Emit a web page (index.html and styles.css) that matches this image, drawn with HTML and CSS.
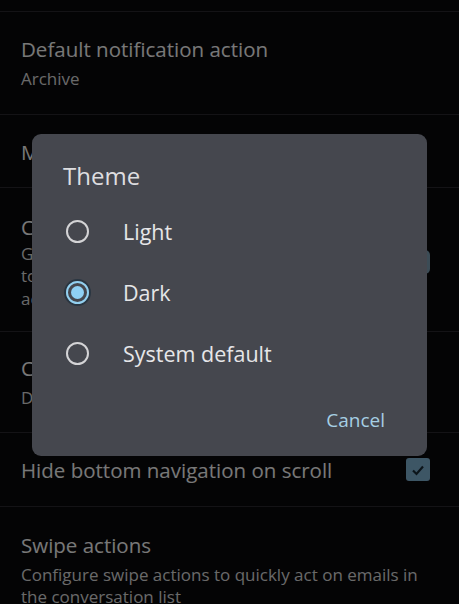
FILE: index.html
```html
<!DOCTYPE html>
<html>
<head>
<meta charset="utf-8">
<link rel="stylesheet" href="styles.css">
</head>
<body>
<div class="screen">
  <div class="list">
    <div class="topbar"></div>
    <div class="row">
      <div class="text">
        <div class="title">Default notification action</div>
        <div class="sub">Archive</div>
      </div>
    </div>
    <div class="row">
      <div class="text">
        <div class="title">Manage notifications</div>
      </div>
    </div>
    <div class="row row-tall">
      <div class="text">
        <div class="title">Conversation view</div>
        <div class="sub">Group emails with the same topic<br>together for IMAP, POP3 and Exchange<br>accounts</div>
      </div>
      <div class="toggle"><div class="thumb"></div></div>
    </div>
    <div class="row row-density">
      <div class="text">
        <div class="title">Conversation list density</div>
        <div class="sub">Default</div>
      </div>
    </div>
    <div class="row row-check">
      <div class="text">
        <div class="title">Hide bottom navigation on scroll</div>
      </div>
      <div class="checkbox">
        <svg width="16" height="16" viewBox="0 0 16 16"><path d="M3 8.5 L6.5 12 L13 4.5" fill="none" stroke="#1a2c38" stroke-width="2.2"/></svg>
      </div>
    </div>
    <div class="row last">
      <div class="text">
        <div class="title">Swipe actions</div>
        <div class="sub">Configure swipe actions to quickly act on emails in the conversation list</div>
      </div>
    </div>
  </div>
  <div class="scrim"></div>
  <div class="dialog">
    <div class="dialog-title">Theme</div>
    <div class="options">
      <div class="option">
        <span class="radio"></span>
        <span class="label">Light</span>
      </div>
      <div class="option">
        <span class="radio checked"><span class="dot"></span></span>
        <span class="label">Dark</span>
      </div>
      <div class="option">
        <span class="radio"></span>
        <span class="label">System default</span>
      </div>
    </div>
    <div class="actions">
      <span class="btn">Cancel</span>
    </div>
  </div>
</div>
</body>
</html>
```

FILE: styles.css
```css
* { box-sizing: border-box; }
html, body {
  margin: 0;
  padding: 0;
  background: #0a090c;
  width: 459px;
  height: 604px;
  overflow: hidden;
  font-family: "Open Sans", Roboto, "Liberation Sans", sans-serif;
}
.screen {
  position: relative;
  width: 459px;
  height: 604px;
  overflow: hidden;
}
.list {
  display: flex;
  flex-direction: column;
}
.topbar {
  height: 12px;
  border-bottom: 1px solid #2a292e;
}
.row {
  display: flex;
  align-items: center;
  justify-content: space-between;
  padding: 25px 29px 23px 21px;
  border-bottom: 1px solid #2a292e;
}
.row-tall {
  padding-top: 27px;
  padding-bottom: 21px;
}
.row-density {
  padding-top: 24px;
  padding-bottom: 22px;
}
.row-check {
  padding-bottom: 24px;
}
.row.last { border-bottom: none; padding-top: 26px; padding-right: 18px; }
.text {
  display: flex;
  flex-direction: column;
  gap: 7px;
  min-width: 0;
}
.row-tall .text { gap: 4px; }
.title {
  font-size: 20.5px;
  line-height: 24px;
  color: #fafafa;
}
.sub {
  font-size: 17px;
  line-height: 22.5px;
  color: #dcdcdc;
}
.toggle {
  flex: none;
  width: 44px;
  height: 24px;
  border-radius: 5px;
  background: #7d9fb4;
  margin-left: 16px;
  position: relative;
}
.toggle .thumb {
  position: absolute;
  right: 6px;
  top: 3px;
  width: 18px;
  height: 18px;
  border-radius: 50%;
  background: #d8ecf8;
}
.checkbox {
  flex: none;
  width: 24px;
  height: 23px;
  border-radius: 3px;
  background: #81b3d4;
  display: flex;
  align-items: center;
  justify-content: center;
}
.scrim {
  position: absolute;
  inset: 0;
  background: rgba(0, 0, 0, 0.52);
}
.dialog {
  position: absolute;
  left: 32px;
  top: 134px;
  width: 395px;
  height: 322px;
  border-radius: 9px;
  background: #45474e;
  display: flex;
  flex-direction: column;
  padding: 26px 0 0 0;
}
.dialog-title {
  padding-left: 31px;
  font-size: 24px;
  line-height: 32px;
  color: #dedee0;
}
.options {
  display: flex;
  flex-direction: column;
  margin-top: 9px;
}
.option {
  display: flex;
  align-items: center;
  height: 61px;
  padding-left: 34px;
}
.radio {
  width: 23px;
  height: 23px;
  border-radius: 50%;
  border: 2px solid #d4d4d6;
  display: flex;
  align-items: center;
  justify-content: center;
  flex: none;
}
.radio.checked {
  border-color: #92d0f0;
  box-shadow: 0 0 0 2px rgba(20, 40, 55, 0.55);
}
.radio .dot {
  width: 13px;
  height: 13px;
  border-radius: 50%;
  background: #8fd0f3;
}
.label {
  margin-left: 34px;
  font-size: 21.5px;
  color: #e6e6e8;
}
.actions {
  display: flex;
  justify-content: flex-end;
  padding: 24px 42px 0 0;
}
.btn {
  font-size: 19px;
  line-height: 24px;
  color: #a6cfe4;
}
```
